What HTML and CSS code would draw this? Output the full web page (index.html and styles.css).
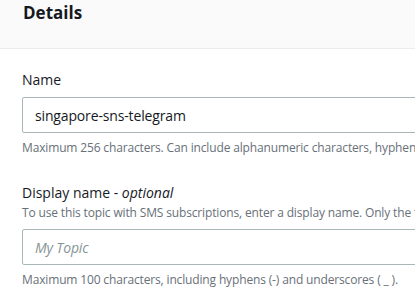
FILE: index.html
```html
<!DOCTYPE html>
<html lang="en">

<head>
  <meta charset="UTF-8" />
  <title>Details</title>
  <link rel="stylesheet" href="styles.css">
</head>

<body>
  <div class="panel">
    <div class="panel-header">
      <h2>Details</h2>
    </div>
    <div class="panel-body">
      <div class="field">
        <label class="field-label">Name</label>
        <input class="field-input" type="text" value="singapore-sns-telegram" />
        <p class="field-hint">Maximum 256 characters. Can include alphanumeric characters, hyphens (-) and underscores (_).</p>
      </div>
      <div class="field">
        <label class="field-label field-label-tight">Display name - <i>optional</i></label>
        <p class="field-desc">To use this topic with SMS subscriptions, enter a display name. Only the first 10 characters are displayed in an SMS message.</p>
        <input class="field-input" type="text" placeholder="My Topic" />
        <p class="field-hint">Maximum 100 characters, including hyphens (-) and underscores ( _ ).</p>
      </div>
    </div>
  </div>
</body>

</html>
```

FILE: styles.css
```css
* {
  box-sizing: border-box;
}

body {
  margin: 0;
  overflow: hidden;
  background: #fff;
  font-family: "Open Sans", "Noto Sans", sans-serif;
  color: #16191f;
}

.panel {
  width: 900px;
}

.panel-header {
  height: 49px;
  background: #fafafa;
  border-bottom: 1px solid #eaeded;
  padding: 0 22px 0 23px;
}

.panel-header h2 {
  margin: 0;
  font-size: 17px;
  line-height: 25px;
  font-weight: 700;
}

.panel-body {
  padding: 20px 22px 0 22px;
}

.field {
  margin-bottom: 26px;
}

.field-label {
  display: block;
  font-size: 14px;
  line-height: 22px;
  margin-bottom: 6px;
}

.field-label-tight {
  margin-bottom: 0;
}

.field-label i {
  font-style: italic;
}

.field-desc {
  margin: 0 0 8px 0;
  font-size: 12px;
  line-height: 17px;
  letter-spacing: -0.15px;
  color: #687078;
  white-space: nowrap;
}

.field-input {
  display: block;
  width: 100%;
  height: 36px;
  padding: 0 12px;
  border: 1px solid #aab7b8;
  border-radius: 2px;
  font-family: inherit;
  font-size: 14px;
  letter-spacing: -0.15px;
  color: #16191f;
  background: #fff;
}

.field-input::placeholder {
  color: #879596;
  font-style: italic;
}

.field-hint {
  margin: 6px 0 0 0;
  font-size: 12px;
  line-height: 17px;
  letter-spacing: -0.15px;
  color: #687078;
  white-space: nowrap;
}
```
